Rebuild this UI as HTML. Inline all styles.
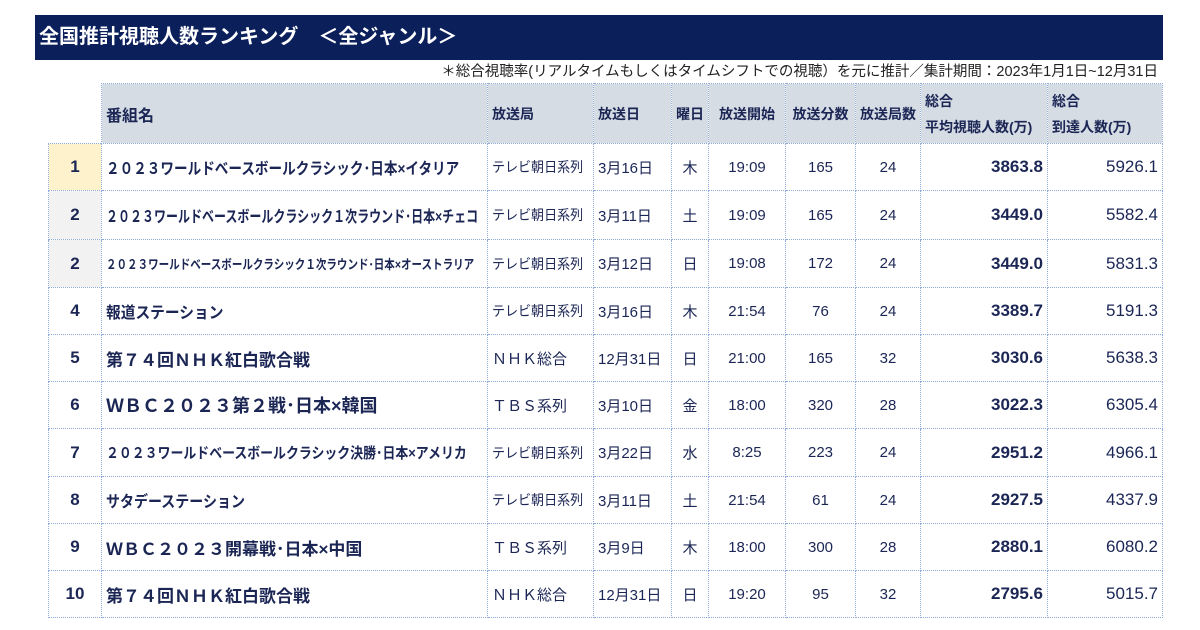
<!DOCTYPE html>
<html><head><meta charset="utf-8"><style>
body{margin:0;width:1200px;height:630px;background:#fff;font-family:"Liberation Sans","Noto Sans CJK JP",sans-serif;color:#1b2655;position:relative;overflow:hidden}
.title{position:absolute;left:35px;top:15px;width:1128px;height:45px;background:#0b1f5b;color:#fff;font-size:20px;font-weight:bold;line-height:45px;padding-left:4px;box-sizing:border-box;white-space:pre}
.note{position:absolute;right:42px;top:62px;font-size:14.5px;line-height:20px;color:#222;white-space:nowrap}
table{position:absolute;left:48px;top:83px;border-collapse:collapse;table-layout:fixed;width:1114px}
td{border:1px dotted #8eaadb;padding:0 4px;white-space:nowrap;overflow:hidden;font-size:15px;text-align:center}
tr.h td{background:#d6dce4;font-weight:bold;font-size:14px;height:59px}
tr.h td.blank{background:#fff;border:none}
tr.r td{height:46px}
td.rk{font-size:17px;font-weight:bold}
td.nm{text-align:left;font-weight:bold;font-size:16px}
td.av{text-align:right;font-weight:bold;font-size:17px}
td.rc{text-align:right;font-size:17px}
.s{display:inline-block;transform-origin:left center}
.tv{display:inline-block;transform:scaleX(0.93);transform-origin:left center;font-size:14px}
.y{background:#fdf2cc}.g{background:#f2f2f2}
</style></head><body>
<div class="title">全国推計視聴人数ランキング　＜全ジャンル＞</div>
<div class="note">＊総合視聴率(リアルタイムもしくはタイムシフトでの視聴）を元に推計／集計期間：2023年1月1日~12月31日</div>
<table>
<colgroup><col style="width:53px"><col style="width:386px"><col style="width:106px"><col style="width:78px"><col style="width:37px"><col style="width:77px"><col style="width:70px"><col style="width:65px"><col style="width:127px"><col style="width:115px"></colgroup>
<tr class="h"><td class="blank"></td><td style="text-align:left;font-size:16px">番組名</td><td style="text-align:left">放送局</td><td style="text-align:left">放送日</td><td>曜日</td><td>放送開始</td><td>放送分数</td><td>放送局数</td><td style="text-align:left;line-height:26px">総合<br>平均視聴人数(万)</td><td style="text-align:left;line-height:26px">総合<br>到達人数(万)</td></tr>
<tr class="r"><td class="rk y">1</td><td class="nm"><span class="s" style="transform:scaleX(0.85)">２０２３ワールドベースボールクラシック･日本×イタリア</span></td><td style="text-align:left"><span class="tv">テレビ朝日系列</span></td><td style="text-align:left">3月16日</td><td>木</td><td>19:09</td><td>165</td><td>24</td><td class="av">3863.8</td><td class="rc">5926.1</td></tr>
<tr class="r" style="height:49px"><td class="rk g">2</td><td class="nm"><span class="s" style="transform:scaleX(0.75);font-size:16px">２０２３ワールドベースボールクラシック１次ラウンド･日本×チェコ</span></td><td style="text-align:left"><span class="tv">テレビ朝日系列</span></td><td style="text-align:left">3月11日</td><td>土</td><td>19:09</td><td>165</td><td>24</td><td class="av">3449.0</td><td class="rc">5582.4</td></tr>
<tr class="r" style="height:48px"><td class="rk g">2</td><td class="nm" style="font-size:13px"><span class="s" style="transform:scaleX(0.81)">２０２３ワールドベースボールクラシック１次ラウンド･日本×オーストラリア</span></td><td style="text-align:left"><span class="tv">テレビ朝日系列</span></td><td style="text-align:left">3月12日</td><td>日</td><td>19:08</td><td>172</td><td>24</td><td class="av">3449.0</td><td class="rc">5831.3</td></tr>
<tr class="r"><td class="rk">4</td><td class="nm"><span class="s" style="transform:scaleX(0.92)">報道ステーション</span></td><td style="text-align:left"><span class="tv">テレビ朝日系列</span></td><td style="text-align:left">3月16日</td><td>木</td><td>21:54</td><td>76</td><td>24</td><td class="av">3389.7</td><td class="rc">5191.3</td></tr>
<tr class="r"><td class="rk">5</td><td class="nm" style="font-size:17px">第７４回ＮＨＫ紅白歌合戦</td><td style="text-align:left">ＮＨＫ総合</td><td style="text-align:left">12月31日</td><td>日</td><td>21:00</td><td>165</td><td>32</td><td class="av">3030.6</td><td class="rc">5638.3</td></tr>
<tr class="r" style="height:47px"><td class="rk">6</td><td class="nm" style="font-size:18px">ＷＢＣ２０２３第２戦･日本×韓国</td><td style="text-align:left">ＴＢＳ系列</td><td style="text-align:left">3月10日</td><td>金</td><td>18:00</td><td>320</td><td>28</td><td class="av">3022.3</td><td class="rc">6305.4</td></tr>
<tr class="r" style="height:48px"><td class="rk">7</td><td class="nm" style="font-size:15px"><span class="s" style="transform:scaleX(0.86)">２０２３ワールドベースボールクラシック決勝･日本×アメリカ</span></td><td style="text-align:left"><span class="tv">テレビ朝日系列</span></td><td style="text-align:left">3月22日</td><td>水</td><td>8:25</td><td>223</td><td>24</td><td class="av">2951.2</td><td class="rc">4966.1</td></tr>
<tr class="r" style="height:47px"><td class="rk">8</td><td class="nm"><span class="s" style="transform:scaleX(0.875)">サタデーステーション</span></td><td style="text-align:left"><span class="tv">テレビ朝日系列</span></td><td style="text-align:left">3月11日</td><td>土</td><td>21:54</td><td>61</td><td>24</td><td class="av">2927.5</td><td class="rc">4337.9</td></tr>
<tr class="r"><td class="rk">9</td><td class="nm" style="font-size:17px">ＷＢＣ２０２３開幕戦･日本×中国</td><td style="text-align:left">ＴＢＳ系列</td><td style="text-align:left">3月9日</td><td>木</td><td>18:00</td><td>300</td><td>28</td><td class="av">2880.1</td><td class="rc">6080.2</td></tr>
<tr class="r" style="height:43px"><td class="rk">10</td><td class="nm" style="font-size:17px">第７４回ＮＨＫ紅白歌合戦</td><td style="text-align:left">ＮＨＫ総合</td><td style="text-align:left">12月31日</td><td>日</td><td>19:20</td><td>95</td><td>32</td><td class="av">2795.6</td><td class="rc">5015.7</td></tr>
</table>
</body></html>
